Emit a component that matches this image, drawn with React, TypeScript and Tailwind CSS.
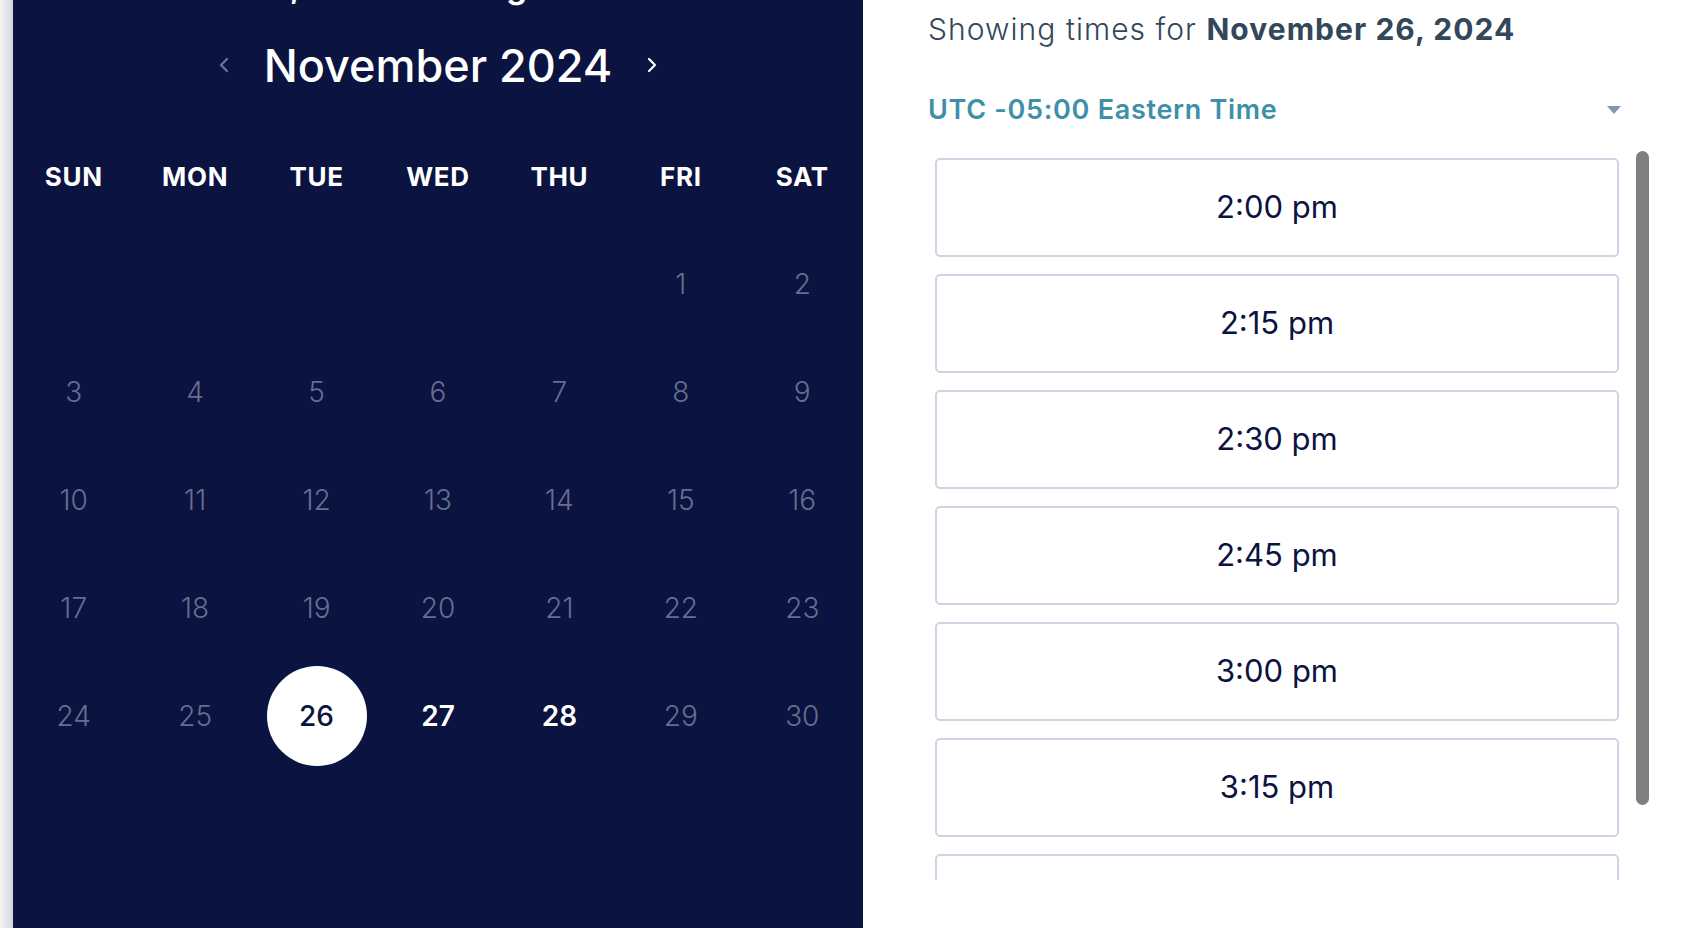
import React from "react";

const weekDays = ["SUN", "MON", "TUE", "WED", "THU", "FRI", "SAT"];

// null = leading blank before Nov 1 (a Friday)
const days: (number | null)[] = [
  null, null, null, null, null, 1, 2,
  ...Array.from({ length: 28 }, (_, i) => i + 3),
];

const available = [27, 28];
const selected = 26;

const slots = ["2:00 pm", "2:15 pm", "2:30 pm", "2:45 pm", "3:00 pm", "3:15 pm", "3:30 pm", "3:45 pm"];

const Chevron: React.FC<{ dir: "left" | "right"; className?: string }> = ({ dir, className }) => (
  <svg width="16" height="18" viewBox="0 0 16 18" fill="none" className={className}>
    {dir === "left" ? (
      <polyline points="11,3 5,9 11,15" stroke="currentColor" strokeWidth="2.2" strokeLinecap="round" strokeLinejoin="round" />
    ) : (
      <polyline points="5,3 11,9 5,15" stroke="currentColor" strokeWidth="2.2" strokeLinecap="round" strokeLinejoin="round" />
    )}
  </svg>
);

const DayCell: React.FC<{ day: number | null }> = ({ day }) => {
  if (day === null) return <div />;
  if (day === selected) {
    return (
      <div className="flex items-center justify-center">
        <button className="flex h-[100px] w-[100px] items-center justify-center rounded-full bg-white text-[28px] font-medium text-[#0b1340]">
          {day}
        </button>
      </div>
    );
  }
  const open = available.includes(day);
  return (
    <div className="flex items-center justify-center">
      <span className={open ? "text-[28px] font-semibold text-white" : "text-[28px] font-light text-[#686d8f]"}>{day}</span>
    </div>
  );
};

const App: React.FC = () => {
  return (
    <div className="flex h-[928px] w-full overflow-hidden bg-white font-['Inter',sans-serif]">
      <div className="w-[13px] shrink-0 bg-gradient-to-r from-[#f2f3f5] to-[#d5d7dc]" />

      <section className="flex w-[850px] shrink-0 flex-col overflow-hidden bg-[#0b1340] text-white">
        <h2 className="-mt-[31px] text-center text-[34px] font-semibold leading-none">Ben, Intro Meeting 30 Min</h2>

        <div className="mt-[32px] flex h-[60px] items-center justify-center gap-[32px]">
          <Chevron dir="left" className="text-[#70758f]" />
          <h1 className="text-[45px] font-medium leading-none">November 2024</h1>
          <Chevron dir="right" className="text-white" />
        </div>

        <div className="mt-[27px] grid grid-cols-7 auto-rows-[108px]">
          {weekDays.map((d) => (
            <div key={d} className="flex items-center justify-center text-[26px] font-bold tracking-wide">
              {d}
            </div>
          ))}
          {days.map((d, i) => (
            <DayCell key={i} day={d} />
          ))}
        </div>
      </section>

      <section className="flex min-w-0 flex-1 flex-col pl-[65px] pr-[43px]">
        <p className="pt-[11px] text-[30px] font-light leading-[36px] tracking-[1.05px] text-[#33475b]">
          Showing times for <span className="font-bold">November 26, 2024</span>
        </p>

        <div className="mr-[28px] mt-[45px] flex h-[36px] items-center justify-between">
          <span className="text-[27px] font-semibold tracking-[0.7px] text-[#3f8fa9]">UTC -05:00 Eastern Time</span>
          <svg width="14" height="8" viewBox="0 0 14 8">
            <polygon points="0,0 14,0 7,8" fill="#7c98b6" />
          </svg>
        </div>

        <div className="mt-[22px] flex h-[730px]">
          <div className="flex flex-1 flex-col gap-[17px] overflow-hidden pl-[7px] pt-[8px]">
            {slots.map((s) => (
              <button
                key={s}
                className="flex h-[99px] shrink-0 items-center justify-center rounded-[5px] border-2 border-[#cbd6e2] bg-white text-[31px] text-[#0b1340]"
              >
                {s}
              </button>
            ))}
          </div>
          <div className="ml-[17px] w-[13px]">
            <div className="mt-[1px] h-[654px] rounded-full bg-[#808080]" />
          </div>
        </div>
      </section>
    </div>
  );
};

export default App;
